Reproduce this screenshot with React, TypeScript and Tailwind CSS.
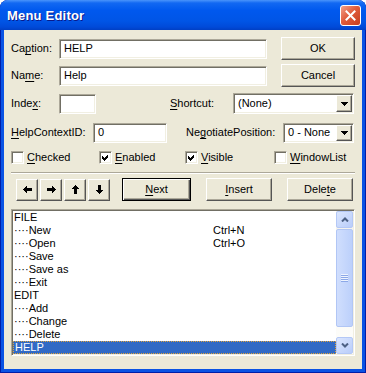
import React from 'react';

const sunken =
  'border border-t-[#aca899] border-l-[#aca899] border-b-white border-r-white shadow-[inset_1px_1px_0_#716f64,inset_-1px_-1px_0_#f1efe2] bg-white';
const raised =
  'border border-t-white border-l-white border-b-[#555] border-r-[#555] shadow-[inset_-1px_-1px_0_#aca899] bg-[#ece9d8]';

const U = ({ children }: { children: React.ReactNode }) => (
  <span className="underline decoration-1 underline-offset-[2px]">{children}</span>
);

const TextBox = ({ w, value }: { w: string; value: string }) => (
  <div className={`${sunken} ${w} h-[20px] flex items-center pl-[4px]`}>{value}</div>
);

const Tri = () => (
  <svg width="7" height="4" viewBox="0 0 7 4" shapeRendering="crispEdges">
    <polygon points="0,0 7,0 3.5,4" fill="#000" />
  </svg>
);

const Combo = ({ w, h, value }: { w: string; h: string; value: string }) => (
  <div className={`${sunken} ${w} ${h} p-[1px] flex items-stretch`}>
    <span className="flex-1 flex items-center pl-[3px]">{value}</span>
    <div className={`${raised} w-[16px] flex items-center justify-center`}>
      <Tri />
    </div>
  </div>
);

const Check = ({ on, children }: { on?: boolean; children: React.ReactNode }) => (
  <div className="flex items-center gap-[3px]">
    <div className={`${sunken} w-[13px] h-[13px] flex items-center justify-center`}>
      {on && (
        <svg width="7" height="7" viewBox="0 0 7 7" shapeRendering="crispEdges">
          <polygon points="0,2 2,4 6,0 6,3 2,7 0,5" fill="#000" />
        </svg>
      )}
    </div>
    <span>{children}</span>
  </div>
);

const Btn = ({ className, children, def }: { className: string; children: React.ReactNode; def?: boolean }) => (
  <div
    className={`${className} flex items-center justify-center ${
      def
        ? 'border border-black bg-[#ece9d8] shadow-[inset_1px_1px_0_#fff,inset_-1px_-1px_0_#555,inset_-2px_-2px_0_#aca899]'
        : raised
    }`}
  >
    {children}
  </div>
);

const Arrow = ({ rot }: { rot: string }) => (
  <svg width="9" height="9" viewBox="0 0 9 9" className={rot} shapeRendering="crispEdges">
    <polygon points="0,4.5 4,0.5 4,3 9,3 9,6 4,6 4,8.5" fill="#000" />
  </svg>
);

const ScrollBtn = ({ up }: { up?: boolean }) => (
  <div className="h-[17px] w-[17px] rounded-[2px] border border-[#b4c8f6] bg-[linear-gradient(to_bottom_right,#dbe6fe,#b9cdfa)] flex items-center justify-center">
    <svg width="8" height="5" viewBox="0 0 8 5" className={up ? '' : 'rotate-180'}>
      <polyline points="1,4.5 4,1.5 7,4.5" fill="none" stroke="#4d6185" strokeWidth="2" />
    </svg>
  </div>
);

const rows: { t: string; s?: string; sel?: boolean }[] = [
  { t: 'FILE' },
  { t: '····New', s: 'Ctrl+N' },
  { t: '····Open', s: 'Ctrl+O' },
  { t: '····Save' },
  { t: '····Save as' },
  { t: '····Exit' },
  { t: 'EDIT' },
  { t: '····Add' },
  { t: '····Change' },
  { t: '····Delete' },
  { t: 'HELP', sel: true },
];

export default function App() {
  return (
    <div className="w-[366px] h-[373px] bg-white font-['Liberation_Sans',Arial,sans-serif] text-[11px] text-black leading-none select-none">
      <div className="w-full h-full flex flex-col rounded-t-[8px] overflow-hidden bg-[#0a53e4] shadow-[inset_1px_0_0_#001ea8,inset_-1px_0_0_#001ea8,inset_0_-1px_0_#001ea8]">
        {/* title bar */}
        <div className="h-[30px] shrink-0 flex items-center pl-[7px] pr-[5px] bg-[linear-gradient(to_bottom,#4a94fb_0%,#1268f2_10%,#0058ee_35%,#0055e6_70%,#004ad9_90%,#003fc4_100%)]">
          <span className="text-white font-bold text-[13px] tracking-[0.2px] [text-shadow:1px_1px_0_#0a1a8a]">
            Menu Editor
          </span>
          <div className="ml-auto w-[21px] h-[21px] rounded-[3px] border border-white bg-[linear-gradient(135deg,#f2a08a_0%,#e05c3c_45%,#c53d1d_100%)] flex items-center justify-center">
            <svg width="11" height="11" viewBox="0 0 11 11">
              <path d="M1.5 1.5 L9.5 9.5 M9.5 1.5 L1.5 9.5" stroke="#fff" strokeWidth="2" strokeLinecap="square" />
            </svg>
          </div>
        </div>

        {/* client area */}
        <div className="flex-1 mx-[4px] mb-[4px] bg-[#ece9d8] flex flex-col">
          <div className="flex items-center h-[23px] mt-[7px]">
            <div className="w-[48px] ml-[7px]">
              Ca<U>p</U>tion:
            </div>
            <TextBox w="w-[208px]" value="HELP" />
            <Btn className="ml-[14px] w-[74px] h-[23px]">OK</Btn>
          </div>

          <div className="flex items-center h-[23px] mt-[4px]">
            <div className="w-[48px] ml-[7px]">
              Na<U>m</U>e:
            </div>
            <TextBox w="w-[208px]" value="Help" />
            <Btn className="ml-[14px] w-[74px] h-[23px]">Cancel</Btn>
          </div>

          <div className="flex items-center h-[21px] mt-[6px]">
            <div className="w-[48px] ml-[7px]">
              Inde<U>x</U>:
            </div>
            <TextBox w="w-[37px]" value="" />
            <div className="ml-[74px] w-[63px]">
              <U>S</U>hortcut:
            </div>
            <Combo w="w-[121px]" h="h-[21px]" value="(None)" />
          </div>

          <div className="flex items-center h-[21px] mt-[8px]">
            <div className="w-[82px] ml-[7px]">
              <U>H</U>elpContextID:
            </div>
            <TextBox w="w-[74px]" value="0" />
            <div className="ml-[19px] w-[97px]">
              Ne<U>g</U>otiatePosition:
            </div>
            <Combo w="w-[71px]" h="h-[20px]" value="0 - None" />
          </div>

          <div className="flex items-center h-[13px] mt-[8px]">
            <div className="ml-[7px] w-[88px]">
              <Check>
                <U>C</U>hecked
              </Check>
            </div>
            <div className="w-[86px]">
              <Check on>
                <U>E</U>nabled
              </Check>
            </div>
            <div className="w-[89px]">
              <Check on>
                <U>V</U>isible
              </Check>
            </div>
            <Check>
              <U>W</U>indowList
            </Check>
          </div>

          <div className="mt-[8px] ml-[7px] w-[344px] h-[2px] border-t border-t-[#aca899] border-b border-b-white" />

          <div className="flex items-center h-[23px] mt-[4px]">
            <div className="ml-[12px] flex gap-[2px]">
              <Btn className="w-[22px] h-[22px]">
                <Arrow rot="" />
              </Btn>
              <Btn className="w-[22px] h-[22px]">
                <Arrow rot="rotate-180" />
              </Btn>
              <Btn className="w-[22px] h-[22px]">
                <Arrow rot="rotate-90" />
              </Btn>
              <Btn className="w-[22px] h-[22px]">
                <Arrow rot="-rotate-90" />
              </Btn>
            </div>
            <Btn def className="ml-[12px] w-[69px] h-[23px]">
              <U>N</U>ext
            </Btn>
            <Btn className="ml-[15px] w-[66px] h-[23px]">
              <U>I</U>nsert
            </Btn>
            <Btn className="ml-[15px] w-[66px] h-[23px]">
              Dele<U>t</U>e
            </Btn>
          </div>

          {/* list box */}
          <div className={`${sunken} mt-[8px] ml-[7px] w-[344px] h-[147px] p-[1px] flex`}>
            <div className="flex-1 flex flex-col">
              {rows.map((r, i) => (
                <div
                  key={i}
                  className={`h-[13px] flex items-center pl-[1px] ${
                    r.sel ? 'bg-[#316ac5] text-white border border-dotted border-[#e0a43c] pl-0' : ''
                  }`}
                >
                  <span className="w-[199px]">{r.t}</span>
                  {r.s && <span>{r.s}</span>}
                </div>
              ))}
            </div>
            <div className="w-[17px] flex flex-col bg-[linear-gradient(to_bottom,#f3f1ec,#fefefb)]">
              <ScrollBtn up />
              <div className="mt-[1px] h-[98px] rounded-[2px] border border-[#b1c6f5] bg-[linear-gradient(to_right,#d0defd,#bcd0fb)] flex items-center justify-center">
                <svg width="7" height="8" viewBox="0 0 7 8" shapeRendering="crispEdges">
                  <rect x="0" y="0" width="7" height="1" fill="#eef4fe" />
                  <rect x="0" y="1" width="7" height="1" fill="#8ca8e8" />
                  <rect x="0" y="2" width="7" height="1" fill="#eef4fe" />
                  <rect x="0" y="3" width="7" height="1" fill="#8ca8e8" />
                  <rect x="0" y="4" width="7" height="1" fill="#eef4fe" />
                  <rect x="0" y="5" width="7" height="1" fill="#8ca8e8" />
                  <rect x="0" y="6" width="7" height="1" fill="#eef4fe" />
                  <rect x="0" y="7" width="7" height="1" fill="#8ca8e8" />
                </svg>
              </div>
              <div className="flex-1" />
              <ScrollBtn />
            </div>
          </div>
        </div>
      </div>
    </div>
  );
}
